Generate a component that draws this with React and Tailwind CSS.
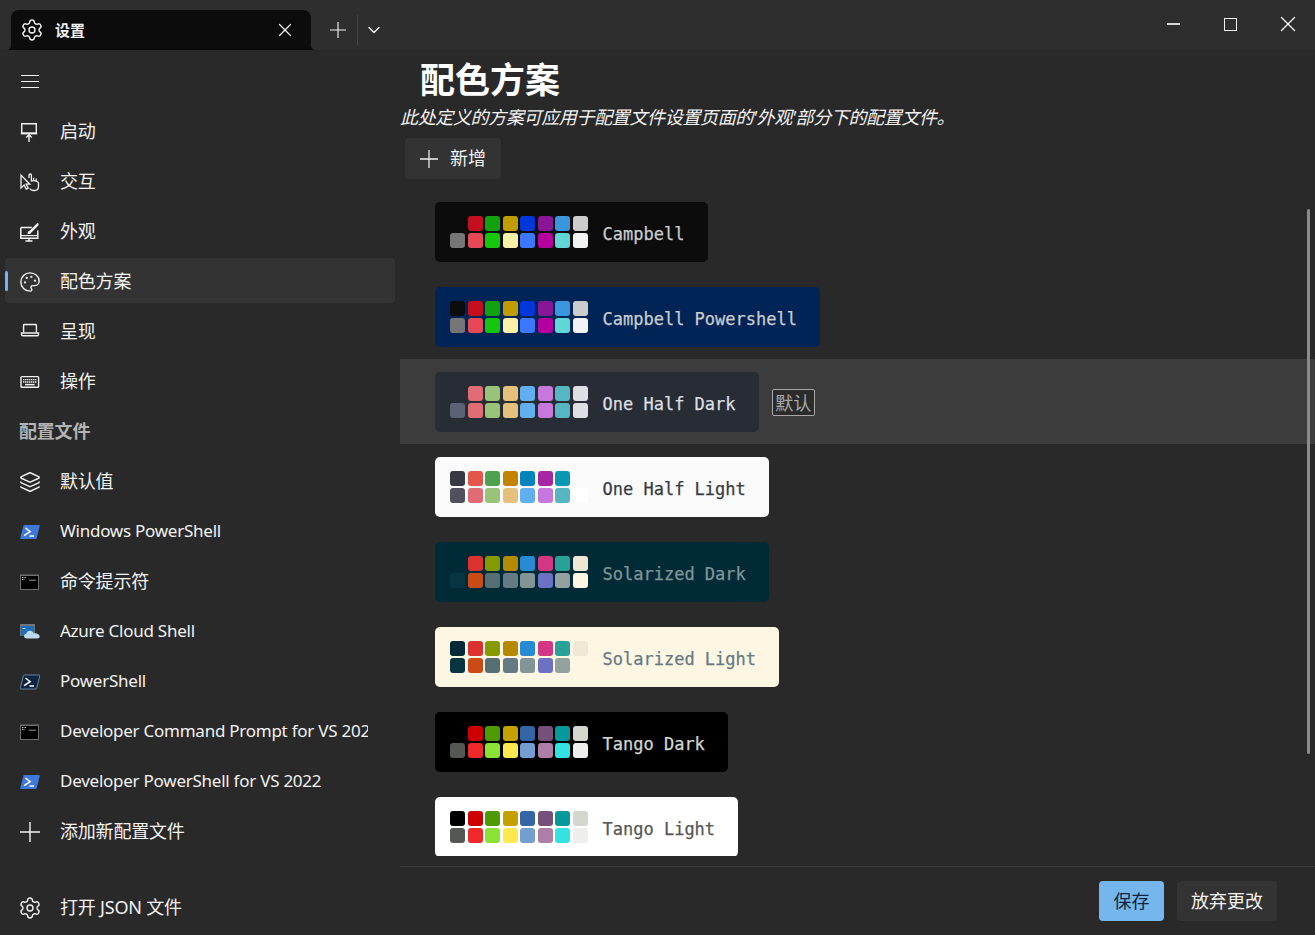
import React from 'react';
import { Settings, Palette, Layers, X, ChevronDown } from 'lucide-react';

const campbellTop = ['bg-[#c50f1f]', 'bg-[#13a10e]', 'bg-[#c19c00]', 'bg-[#0037da]', 'bg-[#881798]', 'bg-[#3a96dd]', 'bg-[#cccccc]'];
const campbellBottom = ['bg-[#767676]', 'bg-[#e74856]', 'bg-[#16c60c]', 'bg-[#f9f1a5]', 'bg-[#3b78ff]', 'bg-[#b4009e]', 'bg-[#61d6d6]', 'bg-[#f2f2f2]'];
const halfDarkTail = ['bg-[#e06c75]', 'bg-[#98c379]', 'bg-[#e5c07b]', 'bg-[#61afef]', 'bg-[#c678dd]', 'bg-[#56b6c2]', 'bg-[#dcdfe4]'];
const solarTop = ['bg-[#dc322f]', 'bg-[#859900]', 'bg-[#b58900]', 'bg-[#268bd2]', 'bg-[#d33682]', 'bg-[#2aa198]', 'bg-[#eee8d5]'];
const solarBottom = ['bg-[#073642]', 'bg-[#cb4b16]', 'bg-[#586e75]', 'bg-[#657b83]', 'bg-[#839496]', 'bg-[#6c71c4]', 'bg-[#93a1a1]', 'bg-[#fdf6e3]'];
const tangoTop = ['bg-[#cc0000]', 'bg-[#4e9a06]', 'bg-[#c4a000]', 'bg-[#3465a4]', 'bg-[#75507b]', 'bg-[#06989a]', 'bg-[#d3d7cf]'];
const tangoBottom = ['bg-[#555753]', 'bg-[#ef2929]', 'bg-[#8ae234]', 'bg-[#fce94f]', 'bg-[#729fcf]', 'bg-[#ad7fa8]', 'bg-[#34e2e2]', 'bg-[#eeeeec]'];

const schemes = [
  { name: 'Campbell', card: 'bg-[#0c0c0c] text-[#cccccc]', swatches: ['bg-[#0c0c0c]', ...campbellTop, ...campbellBottom] },
  { name: 'Campbell Powershell', card: 'bg-[#012456] text-[#cccccc]', swatches: ['bg-[#0c0c0c]', ...campbellTop, ...campbellBottom] },
  {
    name: 'One Half Dark',
    card: 'bg-[#282c34] text-[#dcdfe4]',
    swatches: ['bg-[#282c34]', ...halfDarkTail, 'bg-[#5a6374]', ...halfDarkTail],
    isDefault: true,
  },
  {
    name: 'One Half Light',
    card: 'bg-[#fafafa] text-[#383a42]',
    swatches: [
      'bg-[#383a42]', 'bg-[#e45649]', 'bg-[#50a14f]', 'bg-[#c18301]', 'bg-[#0184bc]', 'bg-[#a626a4]', 'bg-[#0997b3]', 'bg-[#fafafa]',
      'bg-[#4f525d]', 'bg-[#df6c75]', 'bg-[#98c379]', 'bg-[#e4c07a]', 'bg-[#61afef]', 'bg-[#c577dd]', 'bg-[#56b5c1]', 'bg-[#ffffff]',
    ],
  },
  { name: 'Solarized Dark', card: 'bg-[#002b36] text-[#839496]', swatches: ['bg-[#002b36]', ...solarTop, ...solarBottom] },
  { name: 'Solarized Light', card: 'bg-[#fdf6e3] text-[#657b83]', swatches: ['bg-[#002b36]', ...solarTop, ...solarBottom] },
  { name: 'Tango Dark', card: 'bg-[#000000] text-[#d3d7cf]', swatches: ['bg-[#000000]', ...tangoTop, ...tangoBottom] },
  { name: 'Tango Light', card: 'bg-[#ffffff] text-[#555753]', swatches: ['bg-[#000000]', ...tangoTop, ...tangoBottom] },
];

function Glyph({ children, size = 20 }) {
  return (
    <svg width={size} height={size} viewBox="0 0 20 20" fill="none" stroke="#f2f2f2" strokeWidth="1.4" className="shrink-0">
      {children}
    </svg>
  );
}

const PlusIcon = ({ size }) => (
  <Glyph size={size}>
    <path d="M10 0v20M0 10h20" />
  </Glyph>
);

const MenuIcon = () => (
  <Glyph>
    <path d="M1 4.5h18M1 10.5h18M1 16.5h18" strokeWidth="1.2" />
  </Glyph>
);

const StartIcon = () => (
  <Glyph>
    <path d="M1.7 1.7h14.6v9.6H1.7z" />
    <path d="M.8 11.5h16.4" strokeWidth="1.8" />
    <path d="M9 20v-7M6.2 15.6 9 12.8l2.8 2.8" />
  </Glyph>
);

const HandIcon = () => (
  <Glyph>
    <path d="M1 3v13l3.2-3 2 4.2 2-1-2-4h3.6z" strokeWidth="1.3" />
    <path d="M9 6V3.2a1.2 1.2 0 0 1 2.4 0V9l2.4-.4a1 1 0 0 1 .4 0l2.6.7c1 .3 1.7 1.1 1.7 2.2v3c0 2.4-1.8 4-4 4h-1.4c-1.4 0-2.6-.8-3.4-2" strokeWidth="1.3" />
    <path d="M13.6 5.8v3M16.2 6.6v2.6" strokeWidth="1.2" />
  </Glyph>
);

const AppearanceIcon = () => (
  <Glyph>
    <path d="M.8 5.6h11M.8 5.6v10.6h17V8.5" strokeWidth="1.5" />
    <path d="M.8 13.6h17" strokeWidth="1.2" />
    <path d="M9 16.4v2.4M5.5 19h7" />
    <path d="M7.5 12c.2-2 1-3 2.4-3.4L17.6.8l1 1-.2 1.6-6.8 6.8C11 11.6 9.6 12.2 7.5 12z" fill="#f2f2f2" stroke="none" />
  </Glyph>
);

const LaptopIcon = () => (
  <Glyph>
    <path d="M3.6 10.5V3.2c0-.4.3-.7.7-.7h11.4c.4 0 .7.3.7.7v7.3" />
    <path d="M1.5 11h17v1.4c0 .9-.6 1.4-1.4 1.4H2.9c-.8 0-1.4-.5-1.4-1.4z" />
  </Glyph>
);

const KeyboardIcon = () => (
  <Glyph>
    <rect x="1" y="4.6" width="17.6" height="10.6" rx=".8" />
    <path d="M3 7.6h13.6M3 10h13.6" strokeDasharray="1.4 .6" />
    <path d="M5 12.6h9.6" strokeWidth="1.5" />
  </Glyph>
);

const PsIcon = ({ dark }) => (
  <svg width="20" height="20" viewBox="0 0 20 20" className="shrink-0">
    <path
      d="M4.3 3h15c.4 0 .6.3.5.7l-3.1 12.6c-.1.4-.4.7-.8.7H.8c-.5 0-.7-.3-.6-.7L3.5 3.6c.1-.4.4-.6.8-.6z"
      fill={dark ? '#0d2540' : '#3e78d8'}
      stroke={dark ? '#7c9ac0' : 'none'}
      strokeWidth=".8"
    />
    <path d="m5.5 6 4.6 3.6-6 4" fill="none" stroke="#fff" strokeWidth="1.5" />
    <path d="M9.5 14h4.5" stroke="#fff" strokeWidth="1.5" />
  </svg>
);

const CmdIcon = () => (
  <svg width="20" height="20" viewBox="0 0 20 20" className="shrink-0">
    <rect x="0" y="2.5" width="19" height="15.5" fill="#6f6f6f" />
    <rect x="1" y="4" width="17" height="13" fill="#000" />
    <path d="M2 5.6h4.5M2 7.6h3" stroke="#d0d0d0" strokeWidth="1" strokeDasharray="1 .5" />
    <path d="M9 8.2h7" stroke="#9a9a9a" strokeWidth="1" />
  </svg>
);

const AzureIcon = () => (
  <svg width="20" height="20" viewBox="0 0 20 20" className="shrink-0">
    <rect x="0" y="2" width="15" height="12" fill="#6f7479" />
    <rect x="1" y="4" width="13" height="10" fill="#1f6fb6" />
    <path d="M2.5 6.5h3" stroke="#9fd0f2" strokeWidth="1" />
    <path d="M7 16.5c-2 0-3-1-3-2.4 0-1.2.9-2.2 2.2-2.3.4-1.8 2-3 3.8-3 1.7 0 3.1 1 3.7 2.5 2.7-.4 6 .9 6 3.2 0 1.3-1 2-2.4 2z" fill="#bcd9ef" />
  </svg>
);

const lucideProps = { strokeWidth: 1.4, absoluteStrokeWidth: true, color: '#f2f2f2', className: 'shrink-0' };

const topNav = [
  { label: '启动', icon: <StartIcon /> },
  { label: '交互', icon: <HandIcon /> },
  { label: '外观', icon: <AppearanceIcon /> },
  { label: '配色方案', icon: <Palette size={22} {...lucideProps} />, active: true },
  { label: '呈现', icon: <LaptopIcon /> },
  { label: '操作', icon: <KeyboardIcon /> },
];

const profiles = [
  { label: '默认值', icon: <Layers size={22} {...lucideProps} /> },
  { label: 'Windows PowerShell', icon: <PsIcon />, latin: true },
  { label: '命令提示符', icon: <CmdIcon /> },
  { label: 'Azure Cloud Shell', icon: <AzureIcon />, latin: true },
  { label: 'PowerShell', icon: <PsIcon dark />, latin: true },
  { label: 'Developer Command Prompt for VS 2022', icon: <CmdIcon />, latin: true },
  { label: 'Developer PowerShell for VS 2022', icon: <PsIcon />, latin: true },
  { label: '添加新配置文件', icon: <PlusIcon /> },
];

function NavItem({ label, icon, active, latin }) {
  return (
    <div className="h-[50px] px-[5px] pt-[2px]">
      <div className={`relative flex h-[45px] items-center rounded-[4px] pl-[15px] pt-[2px] ${active ? 'bg-[#333333]' : ''}`}>
        {active && <div className="absolute left-0 top-[13px] h-[20px] w-[3px] rounded-full bg-[#75b5ec]" />}
        <div className="flex w-[20px] shrink-0 justify-center">{icon}</div>
        <div
          className={`ml-[20px] w-[308px] overflow-hidden whitespace-nowrap text-[#f2f2f2] ${
            latin ? '-mt-[2px] text-[17px] tracking-[-0.25px]' : 'text-[18px] tracking-[-0.2px]'
          }`}
        >
          {label}
        </div>
      </div>
    </div>
  );
}

function SchemeRow({ scheme }) {
  return (
    <div className={`flex h-[85px] shrink-0 items-start pl-[35px] pt-[13px] ${scheme.isDefault ? 'bg-[#3c3c3c]' : ''}`}>
      <div className={`flex h-[60px] items-center rounded-[5px] pl-[15px] pr-[23.2px] ${scheme.card}`}>
        <div className="grid grid-cols-[repeat(8,15px)] gap-x-[2.5px] gap-y-[2px]">
          {scheme.swatches.map((color, i) => (
            <div key={i} className={`h-[15px] w-[15px] rounded-[3px] ${color}`} />
          ))}
        </div>
        <div className="ml-[15px] whitespace-pre pt-[6px] font-['DejaVu_Sans_Mono',monospace] text-[17px] [-webkit-text-stroke:0.25px]">
          {scheme.name}
        </div>
      </div>
      {scheme.isDefault && (
        <div className="ml-[13px] mt-[17px] flex h-[27px] w-[43px] items-center justify-center rounded-[2px] border border-[#a8a8a8] bg-[#2b2b2b] text-[18px] leading-none text-[#a8a8a8]">
          默认
        </div>
      )}
    </div>
  );
}

export default function App() {
  return (
    <div className="flex h-[935px] w-[1315px] flex-col overflow-hidden bg-[#292929] font-['Noto_Sans','Noto_Sans_CJK_SC',sans-serif]">
      <div className="flex h-[50px] shrink-0 items-end bg-[#2e2e2e] pl-[11px]">
        <div className="relative flex h-[40px] w-[300px] items-center rounded-t-[8px] bg-[#0c0c0c] pl-[9px] text-[#f2f2f2]">
          <div className="absolute -left-[3px] bottom-0 h-[3px] w-[3px] bg-[#0c0c0c] [clip-path:polygon(100%_0,100%_100%,0_100%)]" />
          <div className="absolute -right-[3px] bottom-0 h-[3px] w-[3px] bg-[#0c0c0c] [clip-path:polygon(0_0,100%_100%,0_100%)]" />
          <Settings size={24} strokeWidth={1.4} absoluteStrokeWidth />
          <span className="ml-[11px] text-[15px] font-bold">设置</span>
          <X size={22} strokeWidth={1.3} absoluteStrokeWidth className="ml-auto mr-[15px]" />
        </div>
        <div className="flex h-[40px] items-center pl-[19px] text-[#f2f2f2]">
          <PlusIcon size={16} />
          <div className="ml-[11px] h-[30px] w-px bg-[#454545]" />
          <ChevronDown size={20} strokeWidth={1.4} absoluteStrokeWidth className="ml-[6px]" />
        </div>
        <div className="ml-auto flex h-[50px] items-center gap-[44px] pr-[21px] pb-[2px] text-[#f2f2f2]">
          <div className="h-[2px] w-[13px] bg-[#d8d8d8]" />
          <div className="h-[13px] w-[13px] border border-[#f2f2f2]" />
          <X size={26} strokeWidth={1.4} absoluteStrokeWidth className="-mx-[6.5px]" />
        </div>
      </div>

      <div className="flex min-h-0 flex-1">
        <div className="flex w-[400px] shrink-0 flex-col pt-[6px] pb-[3px]">
          <div className="flex h-[50px] items-center pl-[20px]">
            <MenuIcon />
          </div>
          {topNav.map((item) => (
            <NavItem key={item.label} {...item} />
          ))}
          <div className="flex h-[50px] items-center pl-[19px] text-[18px] font-bold tracking-[-0.2px] text-[#b4b4b4]">配置文件</div>
          {profiles.map((item) => (
            <NavItem key={item.label} {...item} />
          ))}
          <div className="mt-auto">
            <NavItem label="打开 JSON 文件" icon={<Settings size={24} {...lucideProps} />} />
          </div>
        </div>

        <div className="relative flex min-w-0 flex-1 flex-col">
          <div className="flex h-[57px] shrink-0 items-center pl-[20px] pt-[3px] text-[35px] font-bold text-white">配色方案</div>
          <div className="flex h-[20px] shrink-0 items-center whitespace-nowrap text-[18px] italic tracking-[-0.35px] text-[#f2f2f2]">
            此处定义的方案可应用于配置文件设置页面的'外观'部分下的配置文件。
          </div>
          <button className="ml-[5px] mt-[11px] flex h-[41px] w-[96px] shrink-0 items-center rounded-[4px] bg-[#333333] pl-[15px] text-[18px] text-[#f2f2f2]">
            <PlusIcon size={18} />
            <span className="ml-[12px]">新增</span>
          </button>

          <div className="mt-[10px] flex min-h-0 flex-1 flex-col overflow-hidden">
            {schemes.map((scheme) => (
              <SchemeRow key={scheme.name} scheme={scheme} />
            ))}
          </div>

          <div className="absolute right-[5px] top-[159px] h-[545px] w-[3px] rounded-full bg-[#8b8b8b]" />

          <div className="mt-[10px] flex h-[69px] shrink-0 justify-end gap-[13px] border-t border-[#3a3a3a] pr-[38px] pt-[14px]">
            <button className="flex h-[40px] w-[65px] items-center justify-center rounded-[4px] bg-[#75b6ec] text-[18px] text-[#10243a]">保存</button>
            <button className="flex h-[40px] w-[100px] items-center justify-center rounded-[4px] bg-[#333333] text-[18px] text-[#f2f2f2]">放弃更改</button>
          </div>
        </div>
      </div>
    </div>
  );
}
